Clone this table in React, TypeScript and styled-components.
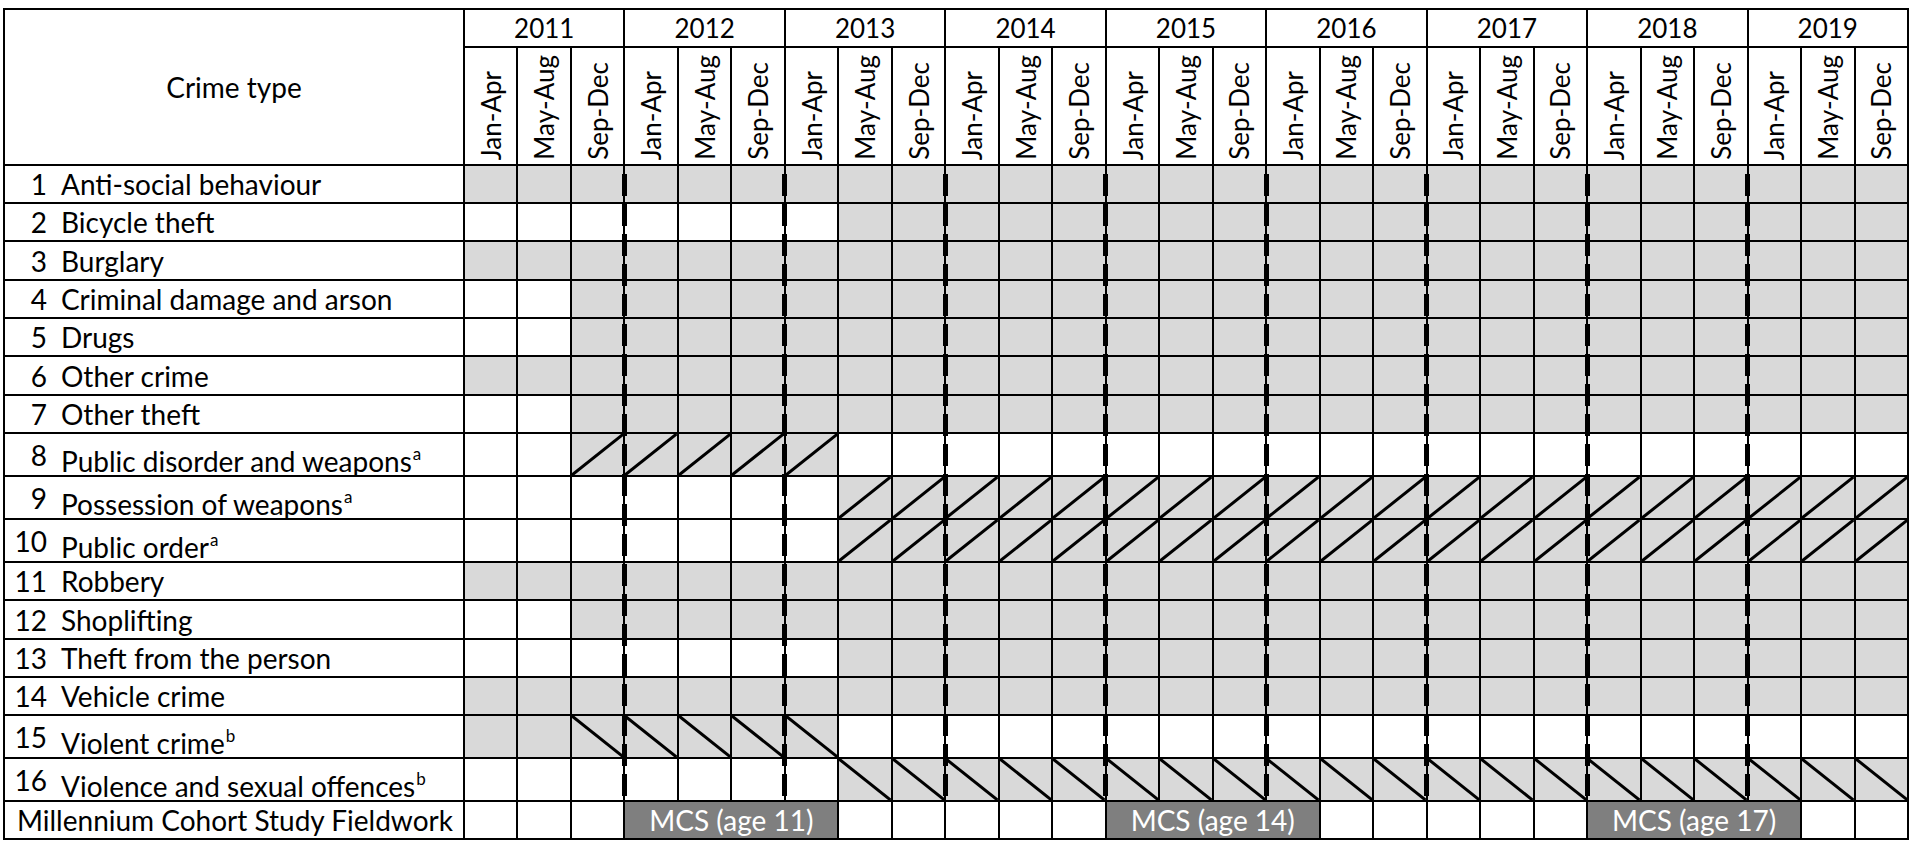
import React from 'react';
import styled, { createGlobalStyle, css } from 'styled-components';

type Fill = 'w' | 'g' | '/' | '\\';

type CrimeRow = {
  n: number;
  label: string;
  sup?: string;
  h: number;
  cells: Fill[];
};

type Place = {
  $row: number;
  $col: number;
  $rowSpan?: number;
  $colSpan?: number;
};

const run = (...parts: [number, Fill][]): Fill[] =>
  parts.flatMap(([count, fill]) => Array<Fill>(count).fill(fill));

const YEARS = [2011, 2012, 2013, 2014, 2015, 2016, 2017, 2018, 2019];
const MONTHS = ['Jan-Apr', 'May-Aug', 'Sep-Dec'];

const ROWS: CrimeRow[] = [
  { n: 1, label: 'Anti-social behaviour', h: 36, cells: run([27, 'g']) },
  { n: 2, label: 'Bicycle theft', h: 36, cells: run([7, 'w'], [20, 'g']) },
  { n: 3, label: 'Burglary', h: 37, cells: run([27, 'g']) },
  { n: 4, label: 'Criminal damage and arson', h: 36, cells: run([2, 'w'], [25, 'g']) },
  { n: 5, label: 'Drugs', h: 36, cells: run([2, 'w'], [25, 'g']) },
  { n: 6, label: 'Other crime', h: 37, cells: run([27, 'g']) },
  { n: 7, label: 'Other theft', h: 36, cells: run([2, 'w'], [25, 'g']) },
  { n: 8, label: 'Public disorder and weapons', sup: 'a', h: 41, cells: run([2, 'w'], [5, '/'], [20, 'w']) },
  { n: 9, label: 'Possession of weapons', sup: 'a', h: 41, cells: run([7, 'w'], [20, '/']) },
  { n: 10, label: 'Public order', sup: 'a', h: 41, cells: run([7, 'w'], [20, '/']) },
  { n: 11, label: 'Robbery', h: 36, cells: run([27, 'g']) },
  { n: 12, label: 'Shoplifting', h: 37, cells: run([2, 'w'], [25, 'g']) },
  { n: 13, label: 'Theft from the person', h: 36, cells: run([7, 'w'], [20, 'g']) },
  { n: 14, label: 'Vehicle crime', h: 36, cells: run([27, 'g']) },
  { n: 15, label: 'Violent crime', sup: 'b', h: 41, cells: run([2, 'g'], [5, '\\'], [20, 'w']) },
  { n: 16, label: 'Violence and sexual offences', sup: 'b', h: 41, cells: run([7, 'w'], [20, '\\']) },
];

const FIELDWORK = [
  { start: 3, label: 'MCS (age 11)' },
  { start: 12, label: 'MCS (age 14)' },
  { start: 21, label: 'MCS (age 17)' },
];
const FIELDWORK_SPAN = 4;

const FIRST_DATA_ROW = 3;
const FIELDWORK_ROW = FIRST_DATA_ROW + ROWS.length;

const GlobalStyle = createGlobalStyle`
  html, body {
    margin: 0;
    padding: 0;
    background: #fff;
  }
  body {
    font-family: Lato, "Liberation Sans", sans-serif;
  }
`;

const place = css<Place>`
  grid-row: ${(p) => p.$row} / span ${(p) => p.$rowSpan ?? 1};
  grid-column: ${(p) => p.$col} / span ${(p) => p.$colSpan ?? 1};
`;

const Table = styled.div`
  display: grid;
  grid-template-columns: 458px repeat(27, 1fr);
  grid-template-rows: 36px 116px ${ROWS.map((r) => `${r.h}px`).join(' ')} 36px;
  gap: 2px;
  padding: 2px;
  width: 1906px;
  box-sizing: border-box;
  margin: 8px 0 0 3px;
  background: #000;
  font-family: Lato, "Liberation Sans", sans-serif;
  font-size: 28px;
  color: #000;
`;

const TitleCell = styled.div<Place>`
  ${place};
  display: flex;
  align-items: center;
  justify-content: center;
  background: #fff;
`;

const YearCell = styled.div<Place>`
  ${place};
  display: flex;
  align-items: center;
  justify-content: center;
  background: #fff;
  font-size: 26px;
`;

const MonthCell = styled.div<Place>`
  ${place};
  display: flex;
  align-items: flex-end;
  justify-content: center;
  padding-bottom: 4px;
  background: #fff;
  font-size: 26px;
`;

const Vertical = styled.span`
  writing-mode: vertical-rl;
  transform: rotate(180deg);
  line-height: 1;
  white-space: nowrap;
`;

const NameCell = styled.div<Place>`
  ${place};
  display: flex;
  align-items: center;
  background: #fff;
  white-space: nowrap;
`;

const Num = styled.span`
  width: 42px;
  text-align: right;
  flex: none;
`;

const Label = styled.span<{ $sup?: boolean }>`
  margin-left: 14px;
  margin-top: ${(p) => (p.$sup ? '11px' : '0')};
`;

const Sup = styled.span`
  font-size: 17px;
  vertical-align: 12px;
  margin-left: 1px;
`;

const FieldworkName = styled(NameCell)`
  padding-left: 12px;
`;

const DataCell = styled.div<Place & { $fill: Fill }>`
  ${place};
  background: ${(p) => (p.$fill === 'w' ? '#fff' : '#d9d9d9')};
  overflow: hidden;
`;

const Diagonal = styled.svg`
  display: block;
  width: 100%;
  height: 100%;
`;

const FieldworkBlock = styled.div<Place>`
  ${place};
  display: flex;
  align-items: center;
  justify-content: center;
  background: #7f7f7f;
  color: #fff;
  white-space: nowrap;
`;

const YearDivider = styled.div<Place>`
  ${place};
  justify-self: start;
  width: 5px;
  margin-left: -3.5px;
  background: repeating-linear-gradient(
    to bottom,
    transparent 0 8px,
    #000 8px 30px
  );
  pointer-events: none;
`;

const Slash: React.FC<{ dir: '/' | '\\' }> = ({ dir }) => (
  <Diagonal viewBox="0 0 100 100" preserveAspectRatio="none">
    {dir === '/' ? (
      <line x1="0" y1="100" x2="100" y2="0" stroke="#000" strokeWidth="3" vectorEffect="non-scaling-stroke" />
    ) : (
      <line x1="0" y1="0" x2="100" y2="100" stroke="#000" strokeWidth="3" vectorEffect="non-scaling-stroke" />
    )}
  </Diagonal>
);

const FieldworkRow: React.FC = () => {
  const items: React.ReactNode[] = [];
  let k = 0;
  while (k < 27) {
    const block = FIELDWORK.find((f) => f.start === k);
    if (block) {
      items.push(
        <FieldworkBlock key={`mcs-${k}`} $row={FIELDWORK_ROW} $col={k + 2} $colSpan={FIELDWORK_SPAN}>
          {block.label}
        </FieldworkBlock>,
      );
      k += FIELDWORK_SPAN;
    } else {
      items.push(<DataCell key={`fw-${k}`} $row={FIELDWORK_ROW} $col={k + 2} $fill="w" />);
      k += 1;
    }
  }
  return <>{items}</>;
};

const CrimeTable: React.FC = () => (
  <Table>
    <TitleCell $row={1} $col={1} $rowSpan={2}>
      Crime type
    </TitleCell>

    {YEARS.map((year, i) => (
      <YearCell key={year} $row={1} $col={i * 3 + 2} $colSpan={3}>
        {year}
      </YearCell>
    ))}

    {YEARS.flatMap((year, i) =>
      MONTHS.map((m, j) => (
        <MonthCell key={`${year}-${m}`} $row={2} $col={i * 3 + j + 2}>
          <Vertical>{m}</Vertical>
        </MonthCell>
      )),
    )}

    {ROWS.map((row, r) => (
      <React.Fragment key={row.n}>
        <NameCell $row={r + FIRST_DATA_ROW} $col={1}>
          <Num>{row.n}</Num>
          <Label $sup={!!row.sup}>
            {row.label}
            {row.sup && <Sup>{row.sup}</Sup>}
          </Label>
        </NameCell>
        {row.cells.map((fill, k) => (
          <DataCell key={k} $row={r + FIRST_DATA_ROW} $col={k + 2} $fill={fill}>
            {(fill === '/' || fill === '\\') && <Slash dir={fill} />}
          </DataCell>
        ))}
      </React.Fragment>
    ))}

    <FieldworkName $row={FIELDWORK_ROW} $col={1}>
      Millennium Cohort Study Fieldwork
    </FieldworkName>
    <FieldworkRow />

    {YEARS.slice(1).map((year, i) => (
      <YearDivider
        key={`div-${year}`}
        $row={FIRST_DATA_ROW}
        $rowSpan={ROWS.length}
        $col={(i + 1) * 3 + 2}
      />
    ))}
  </Table>
);

const App: React.FC = () => (
  <>
    <GlobalStyle />
    <CrimeTable />
  </>
);

export default App;
